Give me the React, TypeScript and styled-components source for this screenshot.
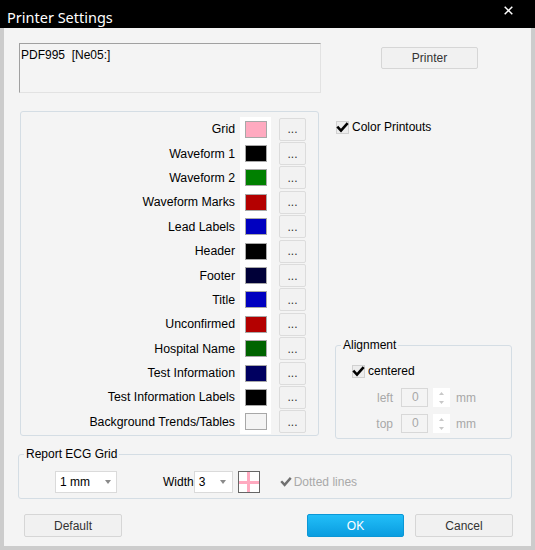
import styled, { createGlobalStyle } from "styled-components";

const GlobalStyle = createGlobalStyle`
  html, body {
    margin: 0;
    padding: 0;
    background: #f4f4f4;
  }
  body {
    font-family: "Liberation Sans", Arial, sans-serif;
    font-size: 12px;
    color: #000;
  }
`;

type ColorRow = { label: string; color: string };

const colorRows: ColorRow[] = [
  { label: "Grid", color: "#ffaac0" },
  { label: "Waveform 1", color: "#000000" },
  { label: "Waveform 2", color: "#008000" },
  { label: "Waveform Marks", color: "#b40000" },
  { label: "Lead Labels", color: "#0000c0" },
  { label: "Header", color: "#000000" },
  { label: "Footer", color: "#000038" },
  { label: "Title", color: "#0000c0" },
  { label: "Unconfirmed", color: "#b40000" },
  { label: "Hospital Name", color: "#006400" },
  { label: "Test Information", color: "#000060" },
  { label: "Test Information Labels", color: "#000000" },
  { label: "Background Trends/Tables", color: "#f4f4f4" },
];

function CheckMark({ color = "#000", size = 13 }: { color?: string; size?: number }) {
  return (
    <svg width={size} height={size} viewBox="0 0 13 13">
      <path d="M2.2 6.6 L5 9.6 L10.8 3" fill="none" stroke={color} strokeWidth="2.6" strokeLinecap="square" />
    </svg>
  );
}

function Arrow() {
  return (
    <svg width="6" height="4" viewBox="0 0 6 4">
      <path d="M0 0 H6 L3 4 Z" fill="#8a8a8a" />
    </svg>
  );
}

function SpinArrows() {
  return (
    <svg width="17" height="18" viewBox="0 0 17 18">
      <path d="M6 6 L8.5 3 L11 6 Z" fill="#c8c8c8" />
      <path d="M6 12 L8.5 15 L11 12 Z" fill="#c8c8c8" />
    </svg>
  );
}

export default function App() {
  return (
    <>
      <GlobalStyle />
      <Window>
        <TitleBar>
          <Title>Printer Settings</Title>
          <CloseButton>
            <svg width="9" height="9" viewBox="0 0 9 9">
              <path d="M0.7 0.7 L8.3 8.3 M8.3 0.7 L0.7 8.3" stroke="#fff" strokeWidth="1.5" />
            </svg>
          </CloseButton>
        </TitleBar>
        <Body>
          <TopRow>
            <PrinterBox>PDF995  [Ne05:]</PrinterBox>
            <PrinterButton>Printer</PrinterButton>
          </TopRow>

          <Middle>
            <ColorPanel>
              {colorRows.map((row) => (
                <ColorLine key={row.label}>
                  <ColorLabel>{row.label}</ColorLabel>
                  <SwatchCell>
                    <Swatch $color={row.color} />
                  </SwatchCell>
                  <DotsButton>...</DotsButton>
                </ColorLine>
              ))}
            </ColorPanel>

            <RightColumn>
              <CheckRow $top={9} $left={1}>
                <CheckBox>
                  <CheckMark />
                </CheckBox>
                <CheckLabel>Color Printouts</CheckLabel>
              </CheckRow>

              <AlignGroup>
                <Legend>Alignment</Legend>
                <CheckRow $top={0} $left={16}>
                  <CheckBox>
                    <CheckMark />
                  </CheckBox>
                  <CheckLabel>centered</CheckLabel>
                </CheckRow>
                <OffsetRow $top={10}>
                  <OffsetLabel>left</OffsetLabel>
                  <SpinInput>0</SpinInput>
                  <Spinner>
                    <SpinArrows />
                  </Spinner>
                  <Unit>mm</Unit>
                </OffsetRow>
                <OffsetRow $top={7}>
                  <OffsetLabel>top</OffsetLabel>
                  <SpinInput>0</SpinInput>
                  <Spinner>
                    <SpinArrows />
                  </Spinner>
                  <Unit>mm</Unit>
                </OffsetRow>
              </AlignGroup>
            </RightColumn>
          </Middle>

          <GridGroup>
            <Legend>Report ECG Grid</Legend>
            <GridRow>
              <Select $width={62} $arrowRight={6}>
                <span>1 mm</span>
                <Arrow />
              </Select>
              <WidthLabel>Width</WidthLabel>
              <Select $width={39} $arrowRight={7}>
                <span>3</span>
                <Arrow />
              </Select>
              <GridPreview />
              <DottedCheck>
                <CheckMark color="#707070" size={12} />
                <DottedLabel>Dotted lines</DottedLabel>
              </DottedCheck>
            </GridRow>
          </GridGroup>

          <ButtonRow>
            <DialogButton $width={98}>Default</DialogButton>
            <PrimaryButton $width={97}>OK</PrimaryButton>
            <DialogButton $width={98} $gap={11}>Cancel</DialogButton>
          </ButtonRow>
        </Body>
      </Window>
    </>
  );
}

const Window = styled.div`
  width: 535px;
  height: 550px;
  display: flex;
  flex-direction: column;
  overflow: hidden;
`;

const TitleBar = styled.div`
  height: 28px;
  flex: none;
  background: #000;
  display: flex;
  align-items: flex-start;
  justify-content: space-between;
`;

const Title = styled.span`
  font-family: "Noto Sans", "Open Sans", sans-serif;
  font-size: 14.5px;
  color: #fff;
  line-height: 28px;
  margin-left: 7px;
  margin-top: 3px;
`;

const CloseButton = styled.div`
  width: 46px;
  height: 20px;
  display: flex;
  align-items: center;
  justify-content: center;
  margin-right: 4px;
`;

const Body = styled.div`
  flex: 1;
  background: #f4f4f4;
  border: 4px solid #cccccc;
  border-top: none;
  display: flex;
  flex-direction: column;
`;

const TopRow = styled.div`
  display: flex;
  align-items: flex-start;
  margin-top: 15px;
  padding-left: 15px;
`;

const PrinterBox = styled.div`
  width: 302px;
  height: 50px;
  box-sizing: border-box;
  border-style: solid;
  border-width: 1px;
  border-color: #a0a0a0 #e2e2e2 #e2e2e2 #a0a0a0;
  padding: 4px 0 0 1px;
  line-height: 14px;
  white-space: pre;
`;

const BaseButton = styled.div`
  box-sizing: border-box;
  background: #f1f1f1;
  border: 1px solid #d6d6d6;
  border-radius: 2px;
  color: #333;
  display: flex;
  align-items: center;
  justify-content: center;
  line-height: 14px;
`;

const PrinterButton = styled(BaseButton)`
  width: 97px;
  height: 22px;
  margin-left: 60px;
  margin-top: 4px;
`;

const Middle = styled.div`
  display: flex;
  align-items: stretch;
  margin-top: 18px;
  padding-left: 16px;
`;

const ColorPanel = styled.div`
  width: 299px;
  height: 325px;
  box-sizing: border-box;
  border: 1px solid #d4dde4;
  border-radius: 3px;
  padding: 5px 12px 0.8px 0;
  display: grid;
  grid-auto-rows: 24.4px;
`;

const ColorLine = styled.div`
  display: grid;
  grid-template-columns: 1fr 31px 35px;
  align-items: center;
`;

const ColorLabel = styled.span`
  text-align: right;
  padding-right: 5px;
  white-space: nowrap;
  font-size: 12.3px;
`;

const SwatchCell = styled.div`
  align-self: stretch;
  background: #fff;
  display: flex;
  align-items: center;
  padding-left: 5px;
`;

const Swatch = styled.div<{ $color: string }>`
  width: 22px;
  height: 17px;
  flex: none;
  box-sizing: border-box;
  border: 1px solid #a8a8a8;
  background: ${(p) => p.$color};
`;

const DotsButton = styled(BaseButton)`
  justify-self: end;
  width: 27px;
  height: 23px;
  background: #f2f2f2;
  border-color: #dcdcdc;
`;

const RightColumn = styled.div`
  width: 177px;
  margin-left: 16px;
  display: flex;
  flex-direction: column;
`;

const CheckRow = styled.div<{ $top: number; $left: number }>`
  display: flex;
  align-items: center;
  margin-top: ${(p) => p.$top}px;
  padding-left: ${(p) => p.$left}px;
`;

const CheckBox = styled.div`
  width: 13px;
  height: 13px;
  box-sizing: border-box;
  border: 1px solid #d0d0d0;
  background: #ececec;
  display: flex;
  align-items: center;
  justify-content: center;
  svg {
    flex: none;
  }
`;

const CheckLabel = styled.span`
  margin-left: 3px;
`;

const Legend = styled.legend`
  margin-left: 5px;
  padding: 0 2px;
  line-height: 14px;
`;

const AlignGroup = styled.fieldset`
  margin: auto 0 -3px 0;
  padding: 12px 0 0 0;
  height: 101px;
  box-sizing: border-box;
  border: 1px solid #d4dde4;
  border-radius: 3px;
  min-inline-size: 0;
`;

const OffsetRow = styled.div<{ $top: number }>`
  display: flex;
  align-items: center;
  margin-top: ${(p) => p.$top}px;
  padding-left: 33px;
  color: #a8a8a8;
`;

const OffsetLabel = styled.span`
  width: 24px;
  text-align: right;
`;

const SpinInput = styled.div`
  width: 27px;
  height: 19px;
  box-sizing: border-box;
  border: 1px solid #d8d8d8;
  margin-left: 8px;
  padding-left: 10px;
  line-height: 17px;
`;

const Spinner = styled.div`
  width: 17px;
  height: 19px;
  margin-left: 5px;
  background: #fff;
  display: flex;
  align-items: center;
`;

const Unit = styled.span`
  margin-left: 6px;
`;

const GridGroup = styled.fieldset`
  margin: 11px 0 0 14px;
  width: 494px;
  box-sizing: border-box;
  padding: 10px 0 5px 0;
  border: 1px solid #d4dde4;
  border-radius: 3px;
  min-inline-size: 0;
`;

const GridRow = styled.div`
  display: flex;
  align-items: center;
  padding-left: 36px;
`;

const Select = styled.div<{ $width: number; $arrowRight: number }>`
  width: ${(p) => p.$width}px;
  height: 22px;
  box-sizing: border-box;
  background: #fff;
  border: 1px solid #dadada;
  display: flex;
  align-items: center;
  justify-content: space-between;
  padding: 0 ${(p) => p.$arrowRight - 1}px 0 4px;
`;

const WidthLabel = styled.span`
  margin-left: 46px;
`;

const GridPreview = styled.div`
  width: 22px;
  height: 22px;
  box-sizing: border-box;
  margin-left: 5px;
  border: 1px solid #666;
  background:
    linear-gradient(#ffaac0, #ffaac0) center / 3px 100% no-repeat,
    linear-gradient(#ffaac0, #ffaac0) center / 100% 3px no-repeat,
    #fff;
`;

const DottedCheck = styled.div`
  display: flex;
  align-items: center;
  margin-left: 20px;
`;

const DottedLabel = styled.span`
  margin-left: 2px;
  color: #a9a9a9;
`;

const ButtonRow = styled.div`
  display: flex;
  margin-top: 15px;
  padding-left: 20px;
`;

const DialogButton = styled(BaseButton)<{ $width: number; $gap?: number }>`
  width: ${(p) => p.$width}px;
  height: 23px;
  margin-left: ${(p) => p.$gap ?? 0}px;
`;

const PrimaryButton = styled(DialogButton)`
  margin-left: 185px;
  background: linear-gradient(#22bef8, #0a9de0);
  border-color: #0b97d6;
  color: #fff;
`;
